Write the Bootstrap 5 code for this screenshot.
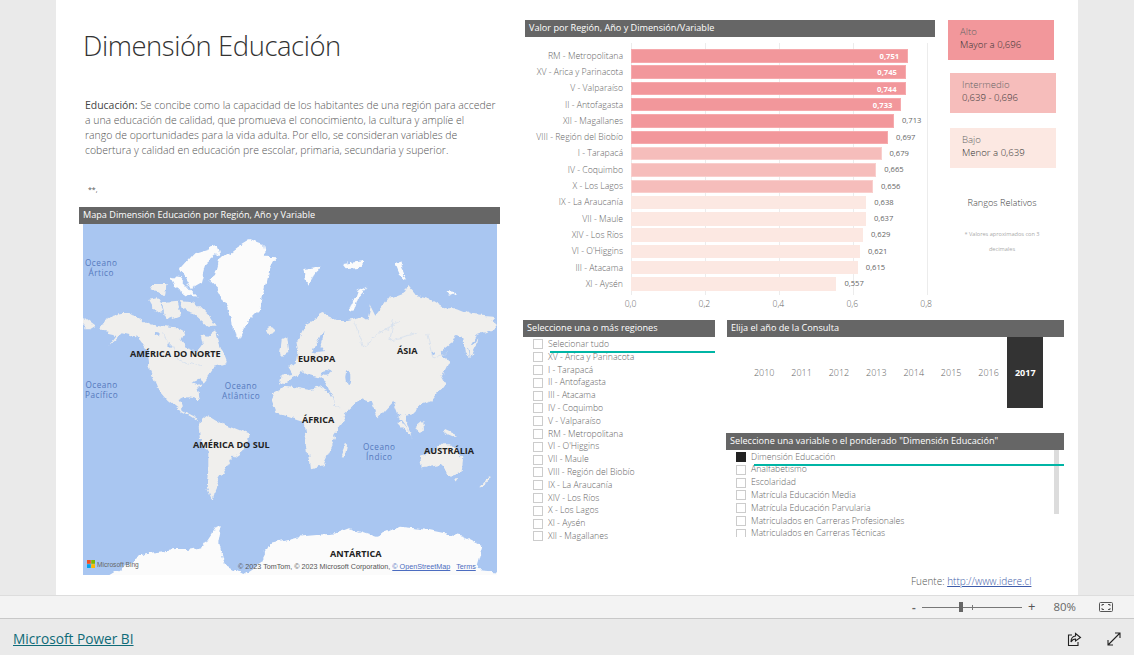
<!DOCTYPE html>
<html lang="es">
<head>
<meta charset="UTF-8" />
<meta name="viewport" content="width=device-width,initial-scale=1" />
<link href="https://cdn.jsdelivr.net/npm/bootstrap@5.3.0/dist/css/bootstrap.min.css" rel="stylesheet">
<title>Dimensión Educación</title>
<style>
html, body { height: 655px; overflow: hidden; }
body { background: #eaeaea; font-family: "Open Sans", "Liberation Sans", sans-serif; color: #555; }
.report { width: 1022px; height: 595px; margin-left: 56px; background: #fff; flex: none; }
.col-left { width: 421px; margin-left: 23px; }
.col-right { width: 541px; margin-left: 23px; padding-top: 20px; }
.page-title { font-size: 27.4px; font-weight: 300; line-height: 40px; margin: 26px 0 0 4px; color: #333; letter-spacing: -.42px; white-space: nowrap; }
.intro { font-size: 10.45px; line-height: 15px; margin: 32px 0 0 6px; color: #555; white-space: nowrap; font-weight: 300; }
.intro b { font-weight: 500; color: #444; }
.stars { font-size: 7px; line-height: 8px; margin: 28px 0 0 9px; height: 21px; color: #555; }
.vis-head { height: 17px; line-height: 16px; background: #666; color: #fff; font-size: 9.15px; padding-left: 4px; white-space: nowrap; font-weight: 500; }
.map-box { position: relative; width: 414px; height: 351px; margin-left: 4px; overflow: hidden; background: #a9c6f1; }
.map-box > svg { display: block; }
.map-lbl { position: absolute; font-size: 9.1px; line-height: 10px; font-weight: 700; color: #222; white-space: nowrap; }
.map-sea { position: absolute; font-size: 8.2px; line-height: 10px; color: #5579bd; text-align: center; letter-spacing: .5px; white-space: nowrap; }
.map-copy { position: absolute; left: 155px; top: 338px; font-size: 7.2px; line-height: 9px; color: #555; white-space: nowrap; font-family: "Liberation Sans", sans-serif; }
.map-copy u { color: #4b6cc0; }
.bing { position: absolute; left: 4px; top: 336px; font-size: 6.6px; line-height: 9px; color: #666; white-space: nowrap; font-family: "Liberation Sans", sans-serif; }
.bing svg { display: inline-block; vertical-align: -1px; margin-right: 2px; }
.chart-wrap { width: 410px; margin-left: 2px; }
.chart-body { margin-top: 6px; }
.chart-names { width: 98px; padding-top: 4.7px; margin-right: 7.5px; }
.chart-names div { height: 16.3px; line-height: 16px; font-size: 8.7px; text-align: right; color: #666; white-space: nowrap; font-weight: 300; }
.chart-bars { width: 297px; height: 252px; padding-top: 4.7px; background: repeating-linear-gradient(90deg, #ececec 0 1px, transparent 1px 73.9px); }
.bar-row { height: 16.3px; display: flex; align-items: center; }
.bar-fill { height: 13.4px; line-height: 12px; font-size: 7.6px; text-align: right; padding-right: 8px; color: #fff; font-weight: 700; }
.bar-alto { background: #f2979b; border: 1px solid #f6aaad; }
.bar-medio { background: #f6bdbb; border: 1px solid #f9cfcd; }
.bar-bajo { background: #fce8e2; }
.bar-val { font-size: 7.6px; color: #666; margin-left: 8px; }
.chart-axis { margin-left: 105.5px; height: 17px; line-height: 18px; font-size: 8.6px; color: #666; font-weight: 300; }
.chart-axis span { width: 73.9px; transform: translateX(-36.9px); text-align: center; flex: none; }
.legend-col { width: 108px; margin-left: 13px; }
.legend-box { width: 106px; height: 40px; padding: 5px 12px; font-size: 9.6px; line-height: 13px; color: #333; font-weight: 300; }
.legend-box span { color: #666; }
.legend-shift { margin-left: 2px; }
.gap-mid { margin-top: 13px; }
.gap-low { margin-top: 15px; }
.legend-title { font-size: 9.2px; color: #444; text-align: center; margin-top: 29px; line-height: 12px; font-weight: 300; }
.legend-note { font-size: 5.6px; color: #aaa; text-align: center; line-height: 15px; margin-top: 18px; padding: 0 4px; }
.slicer-row { margin-top: 8px; }
.slicer-left { width: 192px; position: relative; }
.slicer-right { width: 337px; margin-left: 12px; }
.check-list { position: relative; height: 206px; overflow: hidden; padding-top: 1px; }
.check-row { height: 12.8px; line-height: 12.8px; font-size: 8.7px; color: #666; white-space: nowrap; display: flex; align-items: center; font-weight: 300; }
.check-box { width: 10px; height: 10px; border: 1px solid #ccc; flex: none; margin: 0 5px 0 10px; }
.check-on { background: #222; border-color: #222; }
.teal-line { position: absolute; height: 2px; background: #00b5a5; right: 0; }
.line-reg { left: 27px; top: 14px; }
.line-var { left: 28px; top: 13.5px; }
.year-row { height: 71px; padding-left: 18.5px; }
.year-cell { width: 37.4px; text-align: center; font-size: 9px; line-height: 71px; color: #666; font-weight: 300; }
.year-on { background: #333; color: #fff; font-weight: 700; width: 36px; }
.var-head { margin: 25px 0 0 -1px; width: 338px; }
.var-list { position: relative; height: 87px; overflow: hidden; margin-left: -1px; width: 338px; padding-top: .6px; }
.var-scroll { position: absolute; left: 328px; top: 0; width: 5px; height: 64px; background: #dcdcdc; }
.fuente { position: absolute; left: 855px; top: 574px; font-size: 10px; line-height: 14px; color: #555; font-weight: 300; white-space: nowrap; }
.fuente a { color: #3d5ba9; }
.zoom-bar { height: 24px; flex: none; background: #f3f3f3; border-top: 1px solid #ddd; border-bottom: 1px solid #c8c8c8; color: #666; font-size: 11.4px; }
.zoom-minus { margin-left: 912px; width: 10px; font-weight: 700; }
.zoom-track { position: relative; width: 100px; height: 1px; background: #777; }
.zoom-thumb { position: absolute; left: 37px; top: -5px; width: 4px; height: 10px; background: #666; }
.zoom-tick { position: absolute; left: 50px; top: -2px; width: 1px; height: 5px; background: #777; }
.zoom-plus { margin-left: 6px; font-size: 13px; line-height: 13px; color: #555; padding-bottom: 2px; }
.zoom-pct { margin-left: 18px; width: 46px; }
.foot-bar { height: 36px; padding: 4px 13px 0 13px; }
.foot-bar a { font-size: 13.7px; font-weight: 500; color: #0f6b78; }
.foot-icons svg { display: block; }
.foot-gap { margin-right: 25px; }
</style>
</head>
<body class="d-flex flex-column">
  <div class="report d-flex position-relative">
    <div class="col-left">
      <h1 class="page-title">Dimensión Educación</h1>
      <p class="intro"><b>Educación:</b> Se concibe como la capacidad de los habitantes de una región para acceder<br>a una educación de calidad, que promueva el conocimiento, la cultura y amplíe el<br>rango de oportunidades para la vida adulta. Por ello, se consideran variables de<br>cobertura y calidad en educación pre escolar, primaria, secundaria y superior.</p>
      <div class="stars">**,</div>
      <div class="vis-head">Mapa Dimensión Educación por Región, Año y Variable</div>
      <div class="map-box">
        <svg width="414" height="351" viewBox="83 224 414 351">
          <defs>
            <!-- coastline roughening, then a soft blur like the scaled tile image -->
            <filter id="coast" x="0" y="0" width="100%" height="100%" filterUnits="objectBoundingBox">
              <feTurbulence type="fractalNoise" baseFrequency=".11" numOctaves="3" seed="4" result="noise"/>
              <feDisplacementMap in="SourceGraphic" in2="noise" scale="7" xChannelSelector="R" yChannelSelector="G"/>
              <feGaussianBlur stdDeviation=".4"/>
            </filter>
          </defs>
          <rect x="83" y="224" width="414" height="351" fill="#a9c6f1"/>
          <g filter="url(#coast)">
            <rect x="83" y="224" width="414" height="351" fill="#a9c6f1"/>
            <g transform="translate(80 220) scale(.3333)">
              <g fill="#f0efed">
                <!-- Norteamérica -->
                <path d="M60 320 75 300 100 285 130 278 175 290 210 310 250 318 285 322 315 338 305 358 330 395 350 395 368 370 362 345 385 350 408 335 420 375 440 430 405 440 378 480 352 510 358 545 340 535 315 530 296 540 305 570 345 590 352 602 330 588 300 572 265 545 235 510 205 440 200 390 172 350 125 340 85 378 110 345 65 335Z"/>
                <path d="M205 240 230 235 250 270 225 275Z"/>
                <path d="M245 250 290 245 300 285 260 300Z"/>
                <path d="M300 240 345 245 390 290 410 320 385 320 340 280 310 270Z"/>
                <path d="M215 195 260 195 255 225 225 215Z"/>
                <path d="M10 290 22 300 46 318 30 328 10 328Z"/>
                <!-- Eurasia -->
                <path d="M600 490 605 470 640 465 625 440 650 428 655 395 650 370 680 310 730 282 770 300 800 300 845 290 860 300 870 255 885 285 925 235 975 215 985 195 1010 225 1045 235 1095 265 1130 265 1180 285 1240 290 1245 325 1190 345 1165 385 1170 415 1155 400 1150 352 1125 345 1110 375 1085 395 1105 430 1085 470 1095 490 1055 540 1015 555 1000 585 975 590 985 620 998 650 960 600 940 545 895 595 875 545 842 535 832 548 790 585 760 545 745 505 735 485 690 480 665 455 640 468 615 492Z"/>
                <!-- Islas -->
                <ellipse cx="570" cy="330" rx="12" ry="9"/>
                <path d="M605 360 622 352 628 395 600 405Z"/>
                <path d="M1165 370 1180 375 1195 355 1190 380 1172 415Z"/>
              </g>
              <g fill="#a9c6f1">
                <ellipse cx="738" cy="457" rx="17" ry="7"/>
                <ellipse cx="802" cy="472" rx="6" ry="20"/>
                <path d="M698 398 722 345 735 330 722 375 735 393Z"/>
                <path d="M335 488 360 478 372 488 352 496Z"/>
                <path d="M655 478 690 462 720 470 745 498 705 490Z"/>
                <circle cx="230" cy="345" r="6"/>
                <circle cx="270" cy="375" r="5"/>
                <circle cx="1060" cy="400" r="5"/>
              </g>
              <g fill="#fbfbfb">
                <path d="M385 180 405 165 420 110 450 100 470 85 510 60 550 75 555 110 585 112 565 150 555 200 540 270 500 310 480 355 460 340 455 290 430 240 410 205Z"/>
                <path d="M300 145 340 100 410 78 418 100 380 130 365 190 335 207 315 170Z"/>
                <path d="M270 170 300 175 350 230 320 225 285 200Z"/>
                <path d="M670 150 720 143 700 170 682 197Z"/>
                <path d="M810 272 830 215 860 200 836 228 820 276Z"/>
                <path d="M945 130 960 125 985 178 960 165Z"/>
                <path d="M790 132 850 122 845 140 800 145Z"/>
                <path d="M1098 215 1135 220 1110 230Z"/>
              </g>
              <g fill="none" stroke="#cfdcee" stroke-width="2">
                <path d="M820 300 850 380 900 340 960 300"/>
                <path d="M1040 340 1060 420 1100 400"/>
                <path d="M250 340 300 420 360 440"/>
                <path d="M940 300 930 360 1010 340"/>
              </g>
            </g>
            <g transform="translate(80 400) scale(.3333)">
              <g fill="#f0efed">
                <path d="M355 65 380 45 420 70 460 85 510 105 490 150 455 175 435 210 410 250 398 305 380 260 385 210 385 160 360 120Z"/>
                <path d="M575 0 590 40 670 65 680 130 690 205 730 195 765 120 762 100 800 45 765 15 745 -25 720 -38 690 -30 620 -42 590 -30Z"/>
                <path d="M1020 170 1065 150 1090 130 1110 130 1125 145 1150 170 1145 215 1110 225 1080 195 1025 205Z"/>
                <path d="M780 165 795 128 802 135 797 160 785 172Z"/>
                <path d="M1003 85 1030 62 1032 85 1020 100Z"/>
                <path d="M958 62 995 105 985 105 955 72Z"/>
                <path d="M1090 88 1135 108 1118 112 1090 100Z"/>
                <path d="M1198 262 1228 225 1232 232 1208 262Z"/>
                <path d="M1122 235 1136 235 1128 248Z"/>
              </g>
              <path fill="#fbfbfb" d="M90 526 200 460 280 450 320 450 370 440 410 380 425 375 415 430 430 490 490 522 540 490 570 430 650 410 770 400 810 385 890 410 960 380 1050 390 1150 410 1210 440 1190 510 1260 515 1260 560 90 560Z"/>
            </g>
          </g>
        </svg>
        <div class="map-sea" style="left:2px;top:34px">Oceano<br>Ártico</div>
        <div class="map-sea" style="left:2px;top:156px">Oceano<br>Pacífico</div>
        <div class="map-sea" style="left:139px;top:157px">Oceano<br>Atlântico</div>
        <div class="map-sea" style="left:280px;top:218px">Oceano<br>Índico</div>
        <div class="map-lbl" style="left:47px;top:125px">AMÉRICA DO NORTE</div>
        <div class="map-lbl" style="left:215px;top:130px">EUROPA</div>
        <div class="map-lbl" style="left:314px;top:122px">ÁSIA</div>
        <div class="map-lbl" style="left:219px;top:191px">ÁFRICA</div>
        <div class="map-lbl" style="left:110px;top:216px">AMÉRICA DO SUL</div>
        <div class="map-lbl" style="left:341px;top:222px">AUSTRÁLIA</div>
        <div class="map-lbl" style="left:247px;top:325px">ANTÁRTICA</div>
        <div class="bing"><svg width="8" height="8" viewBox="0 0 8 8"><rect width="3.8" height="3.8" fill="#f25022"/><rect x="4.2" width="3.8" height="3.8" fill="#7fba00"/><rect y="4.2" width="3.8" height="3.8" fill="#00a4ef"/><rect x="4.2" y="4.2" width="3.8" height="3.8" fill="#ffb900"/></svg>Microsoft Bing</div>
        <div class="map-copy">© 2023 TomTom, © 2023 Microsoft Corporation, <u>© OpenStreetMap</u> &nbsp; <u>Terms</u></div>
      </div>
    </div>
    <div class="col-right">
      <div class="d-flex">
        <div class="chart-wrap">
          <div class="vis-head">Valor por Región, Año y Dimensión/Variable</div>
          <div class="d-flex chart-body">
            <div class="chart-names">
              <div>RM - Metropolitana</div>
              <div>XV - Arica y Parinacota</div>
              <div>V - Valparaíso</div>
              <div>II - Antofagasta</div>
              <div>XII - Magallanes</div>
              <div>VIII - Región del Biobío</div>
              <div>I - Tarapacá</div>
              <div>IV - Coquimbo</div>
              <div>X - Los Lagos</div>
              <div>IX - La Araucanía</div>
              <div>VII - Maule</div>
              <div>XIV - Los Ríos</div>
              <div>VI - O'Higgins</div>
              <div>III - Atacama</div>
              <div>XI - Aysén</div>
            </div>
            <div class="chart-bars">
              <div class="bar-row"><div class="bar-fill bar-alto" style="width:277.6px">0,751</div></div>
              <div class="bar-row"><div class="bar-fill bar-alto" style="width:275.4px">0,745</div></div>
              <div class="bar-row"><div class="bar-fill bar-alto" style="width:275px">0,744</div></div>
              <div class="bar-row"><div class="bar-fill bar-alto" style="width:270.9px">0,733</div></div>
              <div class="bar-row"><div class="bar-fill bar-alto" style="width:263.5px"></div><span class="bar-val">0,713</span></div>
              <div class="bar-row"><div class="bar-fill bar-alto" style="width:257.6px"></div><span class="bar-val">0,697</span></div>
              <div class="bar-row"><div class="bar-fill bar-medio" style="width:251px"></div><span class="bar-val">0,679</span></div>
              <div class="bar-row"><div class="bar-fill bar-medio" style="width:245.8px"></div><span class="bar-val">0,665</span></div>
              <div class="bar-row"><div class="bar-fill bar-medio" style="width:242.5px"></div><span class="bar-val">0,656</span></div>
              <div class="bar-row"><div class="bar-fill bar-bajo" style="width:235.8px"></div><span class="bar-val">0,638</span></div>
              <div class="bar-row"><div class="bar-fill bar-bajo" style="width:235.4px"></div><span class="bar-val">0,637</span></div>
              <div class="bar-row"><div class="bar-fill bar-bajo" style="width:232.5px"></div><span class="bar-val">0,629</span></div>
              <div class="bar-row"><div class="bar-fill bar-bajo" style="width:229.5px"></div><span class="bar-val">0,621</span></div>
              <div class="bar-row"><div class="bar-fill bar-bajo" style="width:227.3px"></div><span class="bar-val">0,615</span></div>
              <div class="bar-row"><div class="bar-fill bar-bajo" style="width:205.9px"></div><span class="bar-val">0,557</span></div>
            </div>
          </div>
          <div class="chart-axis d-flex"><span>0,0</span><span>0,2</span><span>0,4</span><span>0,6</span><span>0,8</span></div>
        </div>
        <div class="legend-col">
          <div class="legend-box bar-alto border-0"><span>Alto</span><br>Mayor a 0,696</div>
          <div class="legend-box bar-medio border-0 legend-shift gap-mid"><span>Intermedio</span><br>0,639 - 0,696</div>
          <div class="legend-box bar-bajo legend-shift gap-low"><span>Bajo</span><br>Menor a 0,639</div>
          <div class="legend-title">Rangos Relativos</div>
          <div class="legend-note">* Valores aproximados con 3 decimales</div>
        </div>
      </div>
      <div class="d-flex slicer-row">
        <div class="slicer-left">
          <div class="vis-head">Seleccione una o más regiones</div>
          <div class="check-list">
            <div class="check-row"><i class="check-box"></i>Selecionar tudo</div>
            <div class="check-row"><i class="check-box"></i>XV - Arica y Parinacota</div>
            <div class="check-row"><i class="check-box"></i>I - Tarapacá</div>
            <div class="check-row"><i class="check-box"></i>II - Antofagasta</div>
            <div class="check-row"><i class="check-box"></i>III - Atacama</div>
            <div class="check-row"><i class="check-box"></i>IV - Coquimbo</div>
            <div class="check-row"><i class="check-box"></i>V - Valparaíso</div>
            <div class="check-row"><i class="check-box"></i>RM - Metropolitana</div>
            <div class="check-row"><i class="check-box"></i>VI - O'Higgins</div>
            <div class="check-row"><i class="check-box"></i>VII - Maule</div>
            <div class="check-row"><i class="check-box"></i>VIII - Región del Biobío</div>
            <div class="check-row"><i class="check-box"></i>IX - La Araucanía</div>
            <div class="check-row"><i class="check-box"></i>XIV - Los Ríos</div>
            <div class="check-row"><i class="check-box"></i>X - Los Lagos</div>
            <div class="check-row"><i class="check-box"></i>XI - Aysén</div>
            <div class="check-row"><i class="check-box"></i>XII - Magallanes</div>
            <div class="teal-line line-reg"></div>
          </div>
        </div>
        <div class="slicer-right">
          <div class="vis-head">Elija el año de la Consulta</div>
          <div class="year-row d-flex">
            <div class="year-cell">2010</div>
            <div class="year-cell">2011</div>
            <div class="year-cell">2012</div>
            <div class="year-cell">2013</div>
            <div class="year-cell">2014</div>
            <div class="year-cell">2015</div>
            <div class="year-cell">2016</div>
            <div class="year-cell year-on">2017</div>
          </div>
          <div class="vis-head var-head">Seleccione una variable o el ponderado "Dimensión Educación"</div>
          <div class="var-list">
            <div class="check-row"><i class="check-box check-on"></i>Dimensión Educación</div>
            <div class="check-row"><i class="check-box"></i>Analfabetismo</div>
            <div class="check-row"><i class="check-box"></i>Escolaridad</div>
            <div class="check-row"><i class="check-box"></i>Matrícula Educación Media</div>
            <div class="check-row"><i class="check-box"></i>Matrícula Educación Parvularia</div>
            <div class="check-row"><i class="check-box"></i>Matriculados en Carreras Profesionales</div>
            <div class="check-row"><i class="check-box"></i>Matriculados en Carreras Técnicas</div>
            <div class="var-scroll"></div>
            <div class="teal-line line-var"></div>
          </div>
        </div>
      </div>
    </div>
    <div class="fuente">Fuente: <a href="#">http://www.idere.cl</a></div>
  </div>
  <div class="zoom-bar d-flex align-items-center">
    <span class="zoom-minus">-</span>
    <div class="zoom-track"><i class="zoom-thumb"></i><i class="zoom-tick"></i></div>
    <span class="zoom-plus">+</span>
    <span class="zoom-pct">80%</span>
    <svg width="14" height="10" viewBox="0 0 14 10" fill="none" stroke="#555"><rect x=".5" y=".5" width="13" height="9" rx="1"/><path d="M3 4V2.500H5M9 2.500H11V4M11 6V7.500H9M5 7.500H3V6"/></svg>
  </div>
  <div class="foot-bar d-flex align-items-center justify-content-between">
    <a href="#">Microsoft Power BI</a>
    <div class="foot-icons d-flex align-items-center">
      <svg class="foot-gap" width="15" height="15" viewBox="0 0 15 15" fill="none" stroke="#222" stroke-width="1.1"><path d="M5 3H1.500V13.500H11V10"/><path d="M8.500 1.500 13.500 5.500 8.500 9V7C6.500 7 5 8 4 10 4 7 5.500 4.300 8.500 4Z"/></svg>
      <svg width="14" height="14" viewBox="0 0 14 14" fill="none" stroke="#222" stroke-width="1.1"><path d="M1 13 13 1M8 1H13V6M1 8V13H6"/></svg>
    </div>
  </div>
  <script src="https://cdn.jsdelivr.net/npm/bootstrap@5.3.0/dist/js/bootstrap.bundle.min.js"></script>
</body>
</html>
